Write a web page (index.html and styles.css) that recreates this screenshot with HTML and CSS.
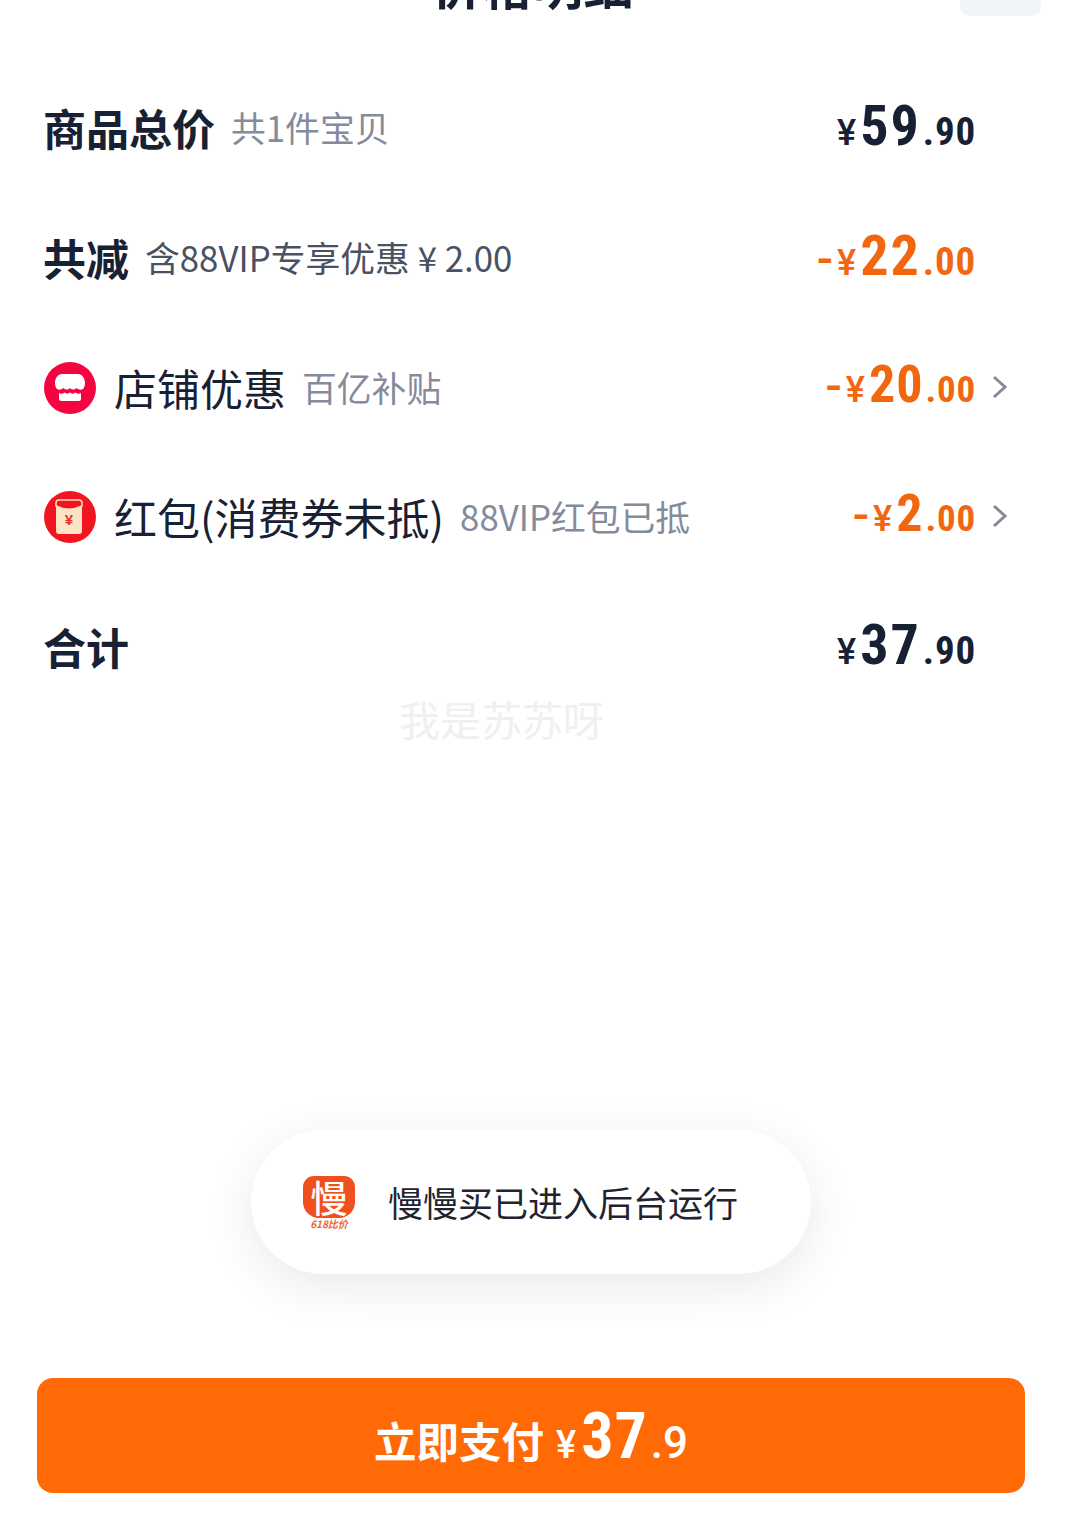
FILE: index.html
```html
<!DOCTYPE html>
<html lang="zh-CN">
<head>
  <meta charset="UTF-8">
  <title>价格明细</title>
  <meta name="viewport" content="width=device-width, initial-scale=1">
  <link rel="stylesheet" href="styles.css">
</head>
<body>

<div class="page">
  <div class="header">
    <h2>价格明细</h2>
    <div class="close-btn"></div>
  </div>

  <div class="rows">
    <div class="row">
      <span class="name bold">商品总价</span>
      <span class="note">共1件宝贝</span>
      <span class="price"><i>¥</i><b>59</b><em>.90</em></span>
    </div>
    <div class="row">
      <span class="name bold">共减</span>
      <span class="note dark">含88VIP专享优惠 ¥ 2.00</span>
      <span class="price orange"><i class="minus">-</i><i>¥</i><b>22</b><em>.00</em></span>
    </div>
    <div class="row">
      <svg class="icon" viewBox="0 0 52 52">
        <circle cx="26" cy="26" r="26" fill="#f5053f"/>
        <path d="M18 12h16c4 0 7 4 7 9 0 3-1 5-2 6-2 1-4 1-6.500-1-2 2-4.500 2-6.500 0-2 2-4.500 2-6.500 0-2.500 2-4.500 2-6.500 1-1-1-2-3-2-6 0-5 3-9 7-9z" fill="#fff"/>
        <path d="M15 31c2 1 3.500 1 5.500-.500 2 1.500 3.500 1.500 5.500 0 2 1.500 3.500 1.500 5.500 0 2 1.500 3.500 1.500 5.500 .500v6c0 1-1 2-2 2H17c-1 0-2-1-2-2z" fill="#fff"/>
      </svg>
      <span class="name">店铺优惠</span>
      <span class="note">百亿补贴</span>
      <span class="price orange small"><i class="minus">-</i><i>¥</i><b>20</b><em>.00</em></span>
      <svg class="chevron" viewBox="0 0 16 26"><path d="M2 3l11 10-11 10" fill="none" stroke="#858b99" stroke-width="3"/></svg>
    </div>
    <div class="row">
      <svg class="icon" viewBox="0 0 52 52">
        <circle cx="26" cy="26" r="26" fill="#f2141e"/>
        <rect x="12" y="9" width="26" height="34" rx="3" fill="#fbe3c4"/>
        <path d="M12 12c0-2 1-3 3-3h20c2 0 3 1 3 3v3c-8 4-18 4-26 0z" fill="#f2141e" stroke="#fbe3c4" stroke-width="1.500"/>
        <text class="icon-yen" x="25" y="34">¥</text>
      </svg>
      <span class="name">红包(消费券未抵)</span>
      <span class="note">88VIP红包已抵</span>
      <span class="price orange small"><i class="minus">-</i><i>¥</i><b>2</b><em>.00</em></span>
      <svg class="chevron" viewBox="0 0 16 26"><path d="M2 3l11 10-11 10" fill="none" stroke="#858b99" stroke-width="3"/></svg>
    </div>
    <div class="row">
      <span class="name bold">合计</span>
      <span class="price"><i>¥</i><b>37</b><em>.90</em></span>
    </div>
  </div>

  <div class="spacer"></div>

  <div class="footer">
    <button class="pay-btn"><span class="pay-label">立即支付</span><i>¥</i><b>37</b><em>.9</em></button>
  </div>

  <div class="watermark">我是苏苏呀</div>

  <div class="toast">
    <div class="toast-logo">
      <div class="logo-box">慢</div>
      <div class="logo-tag">618比价</div>
    </div>
    <span class="toast-text">慢慢买已进入后台运行</span>
  </div>
</div>

</body>
</html>
```

FILE: styles.css
```css
* {
  box-sizing: border-box;
}

body {
  margin: 0;
  background: #fff;
  font-family: "Noto Sans CJK SC", "Noto Sans", sans-serif;
  color: #182033;
}

.page {
  position: relative;
  width: 1071px;
  height: 1538px;
  overflow: hidden;
  display: flex;
  flex-direction: column;
}

.header {
  height: 65px;
  display: flex;
  justify-content: center;
  position: relative;
}

.header h2 {
  margin: -42px 0 0 -5px;
  font-size: 50px;
  letter-spacing: 0.5px;
  line-height: 50px;
  font-weight: 700;
  height: 50px;
}

.close-btn {
  position: absolute;
  left: 960px;
  top: -20px;
  width: 81px;
  height: 36px;
  background: #f1f4f8;
  border-radius: 10px;
}

.row {
  height: 129.7px;
  display: flex;
  align-items: center;
  padding: 0 95px 5px 44px;
}

.icon {
  width: 52px;
  height: 52px;
  margin: 2px 18px 0 0;
  flex: none;
}

.icon-yen {
  font-family: "Liberation Sans", sans-serif;
  font-size: 15px;
  font-weight: 700;
  fill: #e5332a;
  text-anchor: middle;
}

.name {
  font-size: 43px;
  line-height: 50px;
  white-space: nowrap;
}

.name.bold {
  font-weight: 700;
  margin-left: -1px;
}

.note {
  margin-left: 16px;
  font-size: 34.8px;
  line-height: 50px;
  color: #838b9c;
  white-space: nowrap;
}

.note.dark {
  color: #4a5162;
}

.price {
  margin-left: auto;
  width: 300px;
  margin-top: -3px;
  text-align: right;
  font-family: Roboto, sans-serif;
  font-weight: 500;
  white-space: nowrap;
}

.price i, .pay-btn i {
  font-style: normal;
  font-size: 36px;
}

.price .minus {
  margin-right: 4px;
  font-size: 48px;
}

.price b {
  font-size: 56px;
  font-weight: 700;
  font-stretch: 85%;
  letter-spacing: 2px;
  margin-left: 4px;
}

.price em {
  font-style: normal;
  font-size: 39px;
  font-weight: 700;
  font-stretch: 85%;
  letter-spacing: 0.8px;
  margin-left: 2px;
}

.price.small {
  margin-top: -5px;
}

.price.small b {
  font-size: 52px;
  letter-spacing: 1px;
}

.price.small em {
  font-size: 37px;
}

.price.orange {
  color: #f2660f;
}

.chevron {
  width: 16px;
  height: 26px;
  margin: 0 -32px 0 16px;
  flex: none;
}

.spacer {
  flex: 1;
}

.footer {
  padding: 0 46px 45px 37px;
}

.pay-btn {
  width: 100%;
  height: 115px;
  border: none;
  border-radius: 16px;
  background: #ff6a07;
  color: #fff;
  font-family: Roboto, sans-serif;
  font-weight: 500;
  display: flex;
  align-items: baseline;
  justify-content: center;
  padding-top: 21px;
}

.pay-label {
  font-family: "Noto Sans CJK SC", sans-serif;
  font-size: 42.5px;
  font-weight: 700;
  margin-right: 12px;
}

.pay-btn i {
  font-size: 38px;
  margin-right: 5px;
}

.pay-btn b {
  font-size: 64px;
  font-weight: 700;
  font-stretch: 85%;
  letter-spacing: 1px;
}

.pay-btn em {
  font-style: normal;
  font-size: 44px;
  margin-left: 3px;
}

.watermark {
  position: absolute;
  left: 399px;
  top: 689px;
  font-size: 41px;
  line-height: 58px;
  color: #f0f0f0;
}

.toast {
  position: absolute;
  left: 251px;
  top: 1130px;
  width: 560px;
  height: 144px;
  border-radius: 72px;
  background: #fff;
  box-shadow: 0 12px 50px rgba(0,0,0,0.09);
  display: flex;
  align-items: center;
  padding-left: 52px;
}

.toast-logo {
  width: 52px;
  margin-right: 35px;
  padding-top: 2px;
  text-align: center;
}

.logo-box {
  height: 42px;
  border-radius: 11px 11px 16px 16px;
  background: #f0501e;
  color: #fff;
  font-size: 37px;
  line-height: 42px;
  font-weight: 500;
}

.logo-tag {
  font-size: 10px;
  line-height: 12px;
  font-weight: 700;
  font-style: italic;
  color: #e8663c;
}

.toast-text {
  font-size: 35px;
  color: #1f2430;
  white-space: nowrap;
  margin: -2px 0 0 -2px;
}
```
